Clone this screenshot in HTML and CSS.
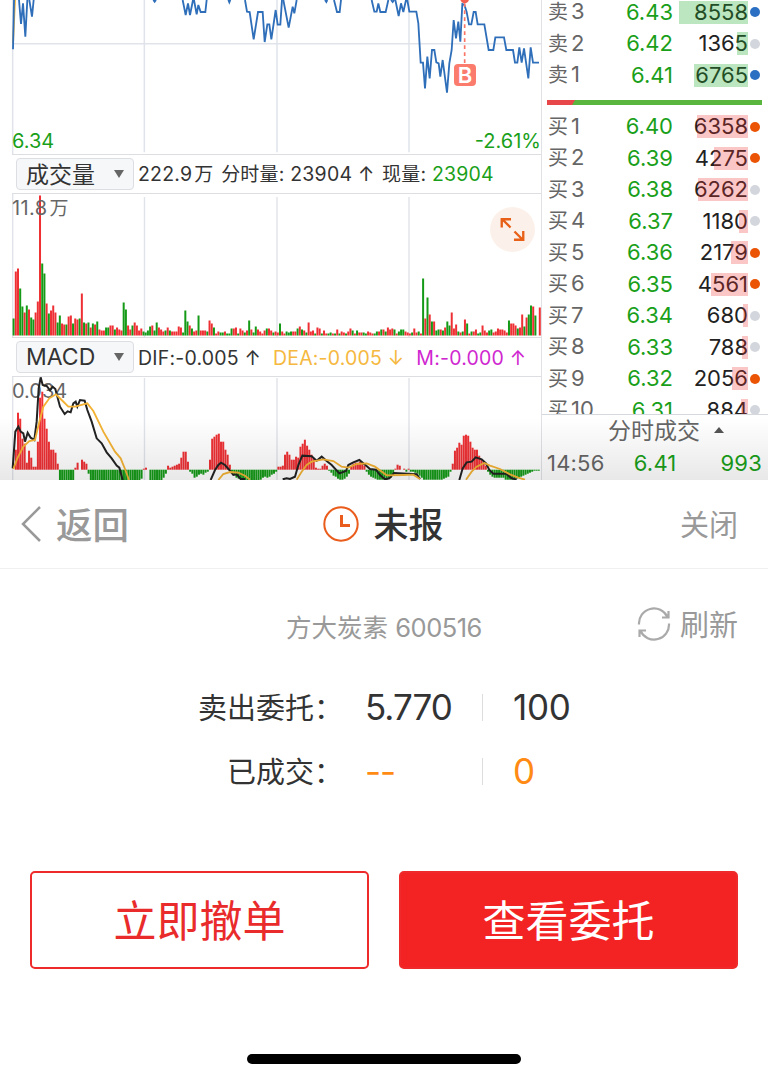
FILE: index.html
```html
<!DOCTYPE html>
<html lang="zh-CN">
<head>
    <meta charset="UTF-8">
    <meta name="viewport" content="width=device-width, initial-scale=1.0">
    <title>委托状态</title>
    <link rel="stylesheet" href="styles.css">
</head>
<body>

    <div class="quote">
        <!-- Charts -->
        <div class="charts">
            <div class="chart price">
                <svg viewBox="0 0 1623 462">
                    <path class="grid" d="M38 0V462M433 0V457M831 0V457M1227 0V457M38 131H1623"/>
                    <path class="avg" d="M39 130L45 0"/>
                    <path class="trend" d="M39 148L42 0M57 0L63 72L69 10L76 110L82 0M88 0L96 50L101 0M460 0L464 5L468 0M548 0L557 45L564 10L570 45L579 0M582 0L590 43L595 15L602 36L616 36L620 0M685 0L688 7L691 0M735 0L741 35L749 36L761 118L774 36L788 36L794 126L802 73L808 73L814 118L827 30L833 74L841 74L846 0"/>
                    <path class="trend" transform="translate(810 0)" d="M40 0L56 83L68 20L73 40L80 0M165 0L169 6L172 0M192 0L201 36L209 36L213 0M305 0L313 35L320 35L325 10L331 36L347 36L355 0M363 0L368 6L372 0M376 0L386 48L393 10L400 36L408 0L412 0L418 35L439 35L445 70L452 188L459 188L465 265L472 170L479 235L486 150L493 150L499 187L506 190L511 230L518 180L531 278L538 190L545 150L551 60L558 115L565 65L571 125L577 12L583 14L590 36L597 73L604 73L611 36L617 36L623 73L643 73L656 150L670 150L676 112L702 112L709 150L729 150L735 188L742 188L748 142L755 188L762 145L775 235L782 142L789 188L807 188"/>
                    <path class="marker-line" d="M1394 10V190"/>
                    <circle class="marker-dot" cx="1394" cy="-3" r="13"/>
                </svg>
                <span class="marker">B</span>
                <span class="low">6.34</span>
                <span class="pct">-2.61%</span>
            </div>

            <div class="bar">
                <button class="select wide"><span>成交量</span><i></i></button>
                <p>222.9<span class="cn">万</span> <span class="cn">分时量</span>: 23904 ↑ <span class="cn">现量</span>: <span class="green">23904</span></p>
            </div>

            <div class="chart volume">
                <svg id="volume" viewBox="0 0 541 143">
                    <path class="grid" d="M12.7 0V143M144.5 3V143M277 3V143M409 3V143"/>
                </svg>
                <span class="scale">11.8<span class="cn">万</span></span>
                <span class="expand">
                    <svg viewBox="0 0 46 46"><path d="M21 21L13 13M12 21V12.500H21.500M25 25L33 33M34 24.500V33.500H24.500"/></svg>
                </span>
            </div>

            <div class="bar macd-bar">
                <button class="select">MACD<i></i></button>
                <p class="indexes"><span>DIF:-0.005 ↑</span><span class="dea">DEA:-0.005 ↓</span><span class="m">M:-0.000 ↑</span></p>
            </div>

            <div class="chart macd">
                <svg id="macd" viewBox="0 0 541 104">
                    <path class="grid" d="M12.7 0V104M144.5 2V104M277 2V104M409 2V104"/>
                </svg>
                <span class="scale">0.034</span>
                <svg class="lines" viewBox="0 123 1623 312">
                    <path class="dif" d="M38 400L46 290L55 275L62 290L70 295L75 320L83 293L92 308L103 315L110 260L116 160L122 127L128 150L140 153L150 166L158 155L166 162L180 215L194 237L203 229L212 232L220 205L227 200L232 215L240 195L254 197L262 225L275 260L290 310L305 325L320 352L335 370L350 392L358 398L368 435M632 435L645 405L655 390L663 383L675 390L688 405L700 420L710 418L722 432L735 432"/>
                    <path class="dea-line" d="M40 402L52 370L70 335L88 318L105 315L118 260L130 215L148 190L168 178L185 195L205 215L225 215L262 205L280 228L310 290L345 350L362 370L375 402L387 435M655 435L670 417L690 411L715 413L735 422L750 434"/>
                    <g transform="translate(810 0)">
                        <path class="dif" d="M38 433L50 430L60 432L75 425L85 390L97 362L125 364L140 377L155 365L170 378L185 390L208 415L228 408L235 390L250 382L268 375L280 385L300 402L318 404L330 420L345 433L358 430L372 414L440 418L450 432M568 435L578 400L590 382L605 380L617 367L635 373L648 385L658 405L670 416L708 416L725 430L740 434"/>
                        <path class="dea-line" d="M80 434L95 410L110 390L125 380L160 373L190 378L215 395L235 398L260 387L290 385L315 395L350 421L400 420L430 419L450 432M588 434L605 410L620 395L643 384L660 392L690 402L720 418L745 428L765 434"/>
                    </g>
                </svg>
            </div>
        </div>

        <!-- Order book -->
        <div class="book">
            <div class="levels">
                <div id="asks"></div>
                <div class="ratio"></div>
                <div id="bids"></div>
            </div>
            <div class="ticks">
                <div class="ticks-title">分时成交<i></i></div>
                <div class="tick"><span>14:56</span><span class="green">6.41</span><span class="green last">993</span></div>
            </div>
        </div>
        <div class="fade"></div>
    </div>

    <!-- Order sheet -->
    <div class="sheet">
        <div class="header">
            <div class="back">
                <svg viewBox="0 0 22 38"><path d="M20 2L3 19L20 36"/></svg><span>返回</span>
            </div>
            <div class="title">
                <svg viewBox="0 0 38 38"><circle cx="19" cy="19" r="16.700"/><path d="M19.500 10V20.500H28"/></svg><span>未报</span>
            </div>
            <div class="close">关闭</div>
        </div>

        <div class="stock">
            <span class="name">方大炭素 <span>600516</span></span>
            <span class="refresh">
                <svg viewBox="0 0 34 34"><path d="M2 17.500A15 15 0 0 1 30.500 10M31.500 4V10.500H25M32 16.500A15 15 0 0 1 3.500 24M2.500 30V23.500H9"/></svg>刷新
            </span>
        </div>

        <div class="order">
            <div class="line"><span class="label">卖出委托：</span><span class="value">5.770</span><span class="count">100</span></div>
            <div class="line"><span class="label">已成交：</span><span class="value orange dash">--</span><span class="count orange">0</span></div>
        </div>

        <div class="actions">
            <button>立即撤单</button>
            <button class="primary">查看委托</button>
        </div>

        <div class="home"></div>
    </div>

    <script src="chart.js"></script>
</body>
</html>
```
FILE: styles.css
```css
* {
    box-sizing: border-box;
}
body {
    margin: 0;
    width: 768px;
    height: 1079px;
    overflow: hidden;
    background: #fff;
    color: #333;
    font-family: Inter, "Noto Sans CJK SC", sans-serif;
}
button {
    font-family: inherit;
    padding: 0;
    margin: 0;
}
svg {
    display: block;
}
p {
    margin: 0;
}
.green {
    color: #1a9f1a;
}
.quote {
    position: relative;
    display: flex;
    height: 480px;
    overflow: hidden;
}
.fade {
    position: absolute;
    left: 0;
    right: 0;
    bottom: 0;
    height: 62px;
    background: linear-gradient(rgba(0, 0, 0, 0), rgba(0, 0, 0, 0.09));
}

/* charts */
.charts {
    width: 542px;
    border-right: 1px solid #dfe1e4;
}
.chart {
    position: relative;
    width: 541px;
}
.chart::after {
    content: "";
    position: absolute;
    left: 12px;
    right: 0;
    bottom: 0;
    height: 1px;
    background: #dcdee2;
}
.chart svg {
    width: 541px;
}
.price {
    height: 155px;
}
.volume {
    height: 145px;
    padding-top: 1px;
}
.volume::before,
.macd::before {
    content: "";
    position: absolute;
    top: 0;
    left: 12px;
    right: 0;
    height: 1px;
    background: #dcdee2;
}
.macd {
    height: 104px;
}
.macd::after {
    display: none;
}
.macd .lines {
    position: absolute;
    top: 0;
    left: 0;
}
.grid {
    fill: none;
    stroke: #e0e3e9;
    stroke-width: 1.4;
}
.price .grid {
    stroke-width: 4.5;
}
.trend,
.avg,
.dif,
.dea-line {
    fill: none;
    stroke: #2f6fba;
    stroke-width: 5.5;
}
.avg,
.dea-line {
    stroke: #f3b234;
}
.dif {
    stroke: #222;
    stroke-width: 6;
}
.marker-line {
    stroke: #fa7566;
    stroke-width: 5;
    stroke-dasharray: 11 10;
}
.marker-dot {
    fill: #f56050;
}
.marker {
    position: absolute;
    left: 454px;
    top: 64px;
    width: 22px;
    height: 22px;
    border-radius: 4px;
    background: #fb7b6c;
    color: #fff;
    font-size: 22px;
    font-weight: 600;
    line-height: 22px;
    text-align: center;
}
.low,
.pct,
.scale {
    position: absolute;
    font-size: 20px;
    line-height: 24px;
    color: #1a9f1a;
}
.low {
    left: 12px;
    bottom: 2px;
}
.pct {
    right: 0;
    bottom: 2px;
}
.scale {
    left: 12px;
    top: 3px;
    color: #666;
}
.volume .scale {
    letter-spacing: 0.4px;
}
.expand {
    position: absolute;
    left: 490px;
    top: 14px;
    width: 45px;
    height: 45px;
    border-radius: 50%;
    background: #fcf1ea;
}
.expand svg {
    width: 45px;
    fill: none;
    stroke: #e86018;
    stroke-width: 2.4;
}
.bar {
    display: flex;
    align-items: center;
    height: 38px;
    padding-left: 16px;
    font-size: 19.5px;
    letter-spacing: 0.2px;
    white-space: pre;
}
.bar .cn,
.scale .cn {
    font-size: 19px;
    margin-left: 2px;
}
.bar p {
    margin-left: 4px;
    padding-top: 1px;
    line-height: 30px;
}
.bar .dea {
    color: #f5b840;
    margin-left: 12px;
}
.bar .m {
    color: #cf27d0;
    margin-left: 12px;
}
.select {
    display: flex;
    align-items: center;
    justify-content: space-between;
    width: 118px;
    height: 32px;
    padding: 0 9px 0 9px;
    border: 1px solid #dcdee2;
    border-radius: 4px;
    background: #f6f7f9;
    color: #333;
    font-size: 23px;
}
.select span {
    padding-bottom: 3px;
}
.select i {
    border: 5px solid transparent;
    border-top: 8px solid #666;
    border-bottom: 0;
}

/* order book */
.book {
    flex: 1;
    min-width: 0;
}
.levels {
    height: 414px;
    overflow: hidden;
    padding: 0 6px 0 6px;
}
#asks {
    margin-top: -4px;
}
.level {
    display: grid;
    grid-template-columns: 50px 75px 1fr 14px;
    align-items: center;
    height: 31.5px;
    font-size: 22px;
    line-height: 31px;
    color: #666;
}
.level .cn {
    font-size: 20px;
    margin-right: 3px;
}
.level .price-cell {
    text-align: right;
    color: #1a9f1a;
}
.level .size {
    position: relative;
    text-align: right;
    color: #222;
}
.level .depth {
    position: absolute;
    right: 0;
    top: 4px;
    height: 23px;
    background: rgba(240, 50, 50, 0.28);
}
#asks .depth {
    background: rgba(40, 175, 50, 0.31);
}
.dot {
    width: 10px;
    height: 10px;
    margin-left: 2px;
    border-radius: 50%;
    background: #d3d6dc;
}
.dot.blue {
    background: #2b6fc2;
}
.dot.orange {
    background: #ea5404;
}
.ratio {
    height: 5px;
    margin: 9px 0 6px -1px;
    background: linear-gradient(120deg, #e8474a 24px, #5ab53f 24.5px);
}
.ticks {
    height: 66px;
    border-top: 1px solid #d5d8dc;
    color: #666;
}
.ticks-title {
    display: flex;
    align-items: center;
    height: 32px;
    padding: 0 0 5px 66px;
    font-size: 23px;
}
.ticks-title i {
    margin: 3px 0 0 14px;
    border: 5px solid transparent;
    border-bottom: 6px solid #555;
    border-top: 0;
}
.tick {
    display: flex;
    padding: 0 6px 0 5px;
    font-size: 22px;
    line-height: 32px;
    letter-spacing: 0.2px;
}
.tick span {
    width: 87px;
}
.tick .last {
    flex: 1;
    width: auto;
    text-align: right;
}

/* order sheet */
.sheet {
    height: 599px;
    background: #fff;
}
.header {
    display: grid;
    grid-template-columns: 1fr auto 1fr;
    align-items: center;
    height: 89px;
    padding: 0 30px 0 20px;
    border-bottom: 1px solid #f0f0f0;
}
.header svg {
    fill: none;
}
.back,
.title {
    display: flex;
    align-items: center;
    font-size: 36.5px;
    color: #999;
}
.back span {
    padding-bottom: 2px;
    font-weight: 500;
}
.back svg {
    width: 22px;
    height: 38px;
    margin-right: 14px;
    stroke: #999;
    stroke-width: 2.5;
}
.title {
    padding-left: 8px;
    font-size: 35px;
    font-weight: 500;
    color: #333;
}
.title span {
    padding-bottom: 3px;
}
.title svg {
    width: 38px;
    height: 38px;
    margin-right: 13px;
    stroke: #ea5c1b;
    stroke-width: 2;
}
.title path {
    stroke-width: 3;
}
.close {
    padding-bottom: 2px;
    text-align: right;
    font-size: 29px;
    color: #999;
}
.stock {
    position: relative;
    height: 116px;
    text-align: center;
    color: #999;
}
.name {
    display: block;
    padding-top: 38px;
    font-size: 25.5px;
    line-height: 41px;
}
.name span {
    letter-spacing: -0.5px;
}
.refresh {
    position: absolute;
    top: 37px;
    right: 30px;
    display: flex;
    align-items: center;
    font-size: 29px;
    line-height: 40px;
}
.refresh svg {
    width: 34px;
    margin: -4px 9px 0 0;
    fill: none;
    stroke: #aaa;
    stroke-width: 2.2;
}
.order {
    height: 186px;
    margin-top: -10px;
}
.line {
    display: flex;
    align-items: center;
    height: 64px;
}
.label {
    width: 343px;
    padding-bottom: 3px;
    text-align: right;
    font-size: 29px;
}
.value,
.count {
    font-size: 35px;
    letter-spacing: -1px;
}
.count {
    margin-top: -1px;
    padding-left: 30px;
    letter-spacing: -0.3px;
}
.value {
    width: 140px;
    height: 27px;
    padding-left: 22px;
    border-right: 1px solid #ddd;
    line-height: 26px;
}
.orange {
    color: #ff8a14;
}
.actions {
    display: flex;
    gap: 30px;
    padding: 10px 30px 0;
}
.actions button {
    flex: 1;
    height: 98px;
    padding-bottom: 5px;
    border: 2px solid #ee2a2a;
    border-radius: 5px;
    background: #fff;
    color: #e92b2b;
    font-size: 43px;
}
.actions .primary {
    background: #f42323;
    color: #fff;
}
.home {
    width: 274px;
    height: 10px;
    margin: 85px auto 0;
    border-radius: 5px;
    background: #000;
}
```
FILE: chart.js
```js
const RED = "#ee3034";
const GREEN = "#159a17";

// one entry per minute, r = up, g = down
const volume = "g17 r64 r67 g47 g29 r23 g30 r26 g18 g16 r23 r34 r140 g72 g62 r32 g22 r25 r30 r23 g13 g20 r12 r11 g11 r19 r20 g12 r17 r16 g17 r42 g13 r12 g13 r8 g12 r11 g14 r6 r5 r5 g8 g8 r10 r10 g6 r8 r6 r5 g33 g26 r10 r6 g10 r13 r10 r5 r7 g4 g3 g5 g9 r10 g5 g13 r8 r6 r4 g5 r8 g5 r4 r4 r4 r9 r8 g3 g25 g14 r10 g7 r4 r5 g20 r5 r5 r5 g4 r15 r12 g8 r2 r4 g3 g3 r4 g2 g2 g7 r7 r8 g2 r7 r5 g3 r5 g15 r6 g3 g9 r6 r4 r2 r5 g7 r7 r5 g3 r4 r3 g12 r4 r2 g4 g3 g4 r4 r4 g7 r9 g6 r5 g3 r13 r4 r5 g2 r8 r7 g2 r5 r2 g2 g3 r2 g2 r6 g2 r4 r3 g2 r4 r7 g5 r2 g5 r3 r3 g3 g2 r4 r3 r2 g2 g4 r4 g6 r6 g4 r8 r6 r7 g6 r2 g4 g6 g6 r4 r3 r2 g3 r7 r3 g4 r2 g57 r17 g38 r21 g14 r14 g5 g6 r6 g5 r8 g14 g10 r23 r7 r11 g4 r3 g4 r16 g12 r2 g4 r4 r6 g2 g3 r10 r5 r3 g5 g6 r3 r4 r7 r6 r6 r5 r3 g15 r12 r12 r10 g7 r8 r21 g9 r18 g21 g30 r29 g20 r0 r28";

const macd = [0, 20, 57, 51, 31, 26, 7, 19, 12, 3, 3, 28, 72, 78, 51, 41, 28, 20, 20, 17, 6, -12, -12, -12, -12, -12, -12, -12, 2, 7, 0, 10, 8, 6, -4,
    -12, -12, -12, -12, -12, -12, -12, -12, -12, -12, -12, -12, -12, -12, -12, -12, -12, -12, -12, -12, -12, -12, -12, -9, 1, 2, 0,
    -11, -11, -11, -11, -11, -11, -8, -4, 4, 2, 3, 4, 5, 6, 12, 18, 18, 8, -2, -4, -8, -7, -5, -4, -5, -3, -2, 10, 31, 33, 35, 36, 28, 28, 20, 15, 5,
    -2, -5, -8, -9, -10, -12, -12, -12, -12, -12, -12, -12, -12, -10, -8, -7, -8, -7, -5, -4, -2, 3, 3, 4, 15, 18, 15, 10, 10, 13, 12, 23, 26, 30, 24, 20,
    15, 11, 2, 1, 1, 4, 6, 4, -1, -3, -6, -7, -9, -10, -10, -9, -7, -4, 3, 6, 7, 7, 8, 6, 4, -2, -5, -7, -8, -9, -10, -10, -10, -10, -10, -9, -8, -5, 1, 5, 4,
    0, 1, -2, 1, -2, -2, -3, -4, -6, -8, -10, -10, -10, -10, -10, -10, -10, -10, -10, -9, -8, -7, -2, 6, 19, 22, 27, 25, 34, 35, 34, 28, 22, 20, 20, 14, 10, 8, 4,
    -2, -5, -7, -8, -8, -8, -8, -8, -10, -10, -10, -10, -10, -9, -8, -7, -6, -5, -4, -3, -2, -1, -1, -1];

// stretches the series over the full 240 minutes
const macdStep = (540 - 12.6) / macd.length;

function addBar(svg, x, y, width, height, color) {
    const rect = document.createElementNS("http://www.w3.org/2000/svg", "rect");
    rect.setAttribute("x", x);
    rect.setAttribute("y", y);
    rect.setAttribute("width", width);
    rect.setAttribute("height", height);
    rect.setAttribute("fill", color);
    svg.appendChild(rect);
}

const volumeSvg = document.getElementById("volume");
const volumeStep = (541 - 12.6) / volume.split(" ").length;
volume.split(" ").forEach((item, i) => {
    const h = Number(item.slice(1));
    addBar(volumeSvg, 12.6 + i * volumeStep, 141.5 - h, 2, h, item[0] === "r" ? RED : GREEN);
});

const macdSvg = document.getElementById("macd");
macd.forEach((h, i) => addBar(macdSvg, 12.6 + i * macdStep, h > 0 ? 93.7 - h : 93.7, 2, Math.abs(h), h > 0 ? RED : GREEN));

// side + level, price, size, depth width, dot
const asks = [["卖", 3, "6.43", 8558, 69, "blue"], ["卖", 2, "6.42", 1365, 11, ""], ["卖", 1, "6.41", 6765, 54, "blue"]];
const bids = [
    ["买", 1, "6.40", 6358, 51, "orange"],
    ["买", 2, "6.39", 4275, 34, "orange"],
    ["买", 3, "6.38", 6262, 50, ""],
    ["买", 4, "6.37", 1180, 9, ""],
    ["买", 5, "6.36", 2179, 17, "orange"],
    ["买", 6, "6.35", 4561, 37, "orange"],
    ["买", 7, "6.34", 680, 5, ""],
    ["买", 8, "6.33", 788, 6, ""],
    ["买", 9, "6.32", 2056, 16, "orange"],
    ["买", 10, "6.31", 884, 7, ""]
];

function renderLevels(id, rows) {
    document.getElementById(id).innerHTML = rows.map(([side, n, price, size, depth, dot]) => `
        <div class="level">
            <span><span class="cn">${side}</span>${n}</span>
            <span class="price-cell">${price}</span>
            <span class="size">${size}<span class="depth" style="width: ${depth}px"></span></span>
            <span class="dot ${dot}"></span>
        </div>`).join("");
}

renderLevels("asks", asks);
renderLevels("bids", bids);
```
